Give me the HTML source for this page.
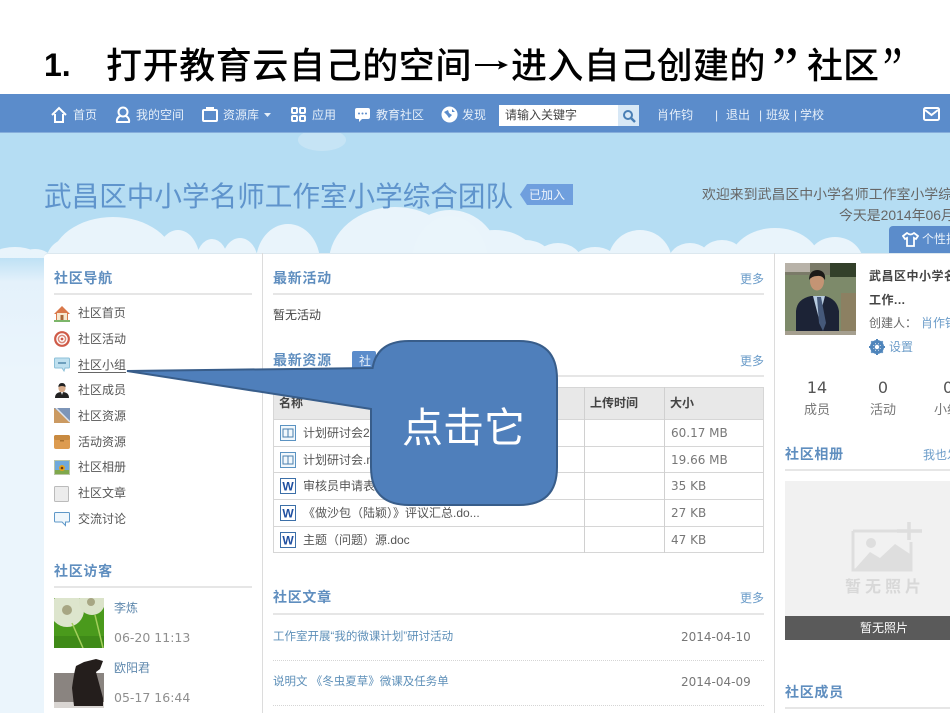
<!DOCTYPE html>
<html lang="zh"><head><meta charset="utf-8"><title>社区</title>
<style>
html,body{margin:0;padding:0;background:#fff}
body{width:950px;height:713px;overflow:hidden;position:relative;font-family:"Liberation Sans","Noto Sans CJK SC",sans-serif}
.t{position:absolute;white-space:nowrap;line-height:20px;height:20px;font-size:12px;color:#555}
.a{position:absolute}
#page{position:absolute;left:0;top:94px;width:950px;height:619px;overflow:hidden;background:#b5ddf3;filter:blur(.35px)}
#in{position:absolute;left:0;top:-94px;width:950px;height:713px}
.nav{color:#e6eff9}
.h{font-weight:700;font-size:14px;color:#5f8ebf;letter-spacing:.7px}
.hr{position:absolute;height:2px;background:#e6e6e6}
.mo{color:#6b9cc9}
.n{font-family:"DejaVu Sans",sans-serif;font-size:12px;color:#777}
.li{color:#555}
.lk{color:#5d8fb8;font-size:11.5px}
.c{text-align:center}
.v{position:absolute;background:#dcdcdc;width:1px}
.q{position:absolute;white-space:nowrap;top:38px;height:60px;line-height:60px;font-size:60px;color:#000;font-family:"Liberation Serif",serif}
</style></head><body>
<div class="t" style="left:44px;top:45px;height:40px;line-height:40px;font-size:32px;font-weight:700;color:#000">1.</div>
<div class="t" style="left:106px;top:41px;height:50px;line-height:50px;font-size:36px;letter-spacing:.6px;color:#000;font-weight:500">打开教育云自己的空间</div>
<svg class="a" style="left:474px;top:58px" width="36" height="14"><path d="M1 7H28" stroke="#000" stroke-width="2"/><path d="M24 2.500L34 7L24 11.500L26 7Z" fill="#000"/></svg>
<div class="t" style="left:511px;top:41px;height:50px;line-height:50px;font-size:36px;letter-spacing:.4px;color:#000;font-weight:500">进入自己创建的</div>
<div class="q" style="left:772px">”</div>
<div class="t" style="left:807px;top:41px;height:50px;line-height:50px;font-size:36px;color:#000;font-weight:500">社区</div>
<div class="q" style="left:883px;transform:scaleX(.72);transform-origin:left top">”</div>

<div id="page"><div id="in">
<svg class="a" style="left:0;top:133px" width="950" height="125">
<defs><linearGradient id="cl" gradientUnits="userSpaceOnUse" x1="0" y1="70" x2="0" y2="125"><stop offset="0" stop-color="#d3e9f7"/><stop offset="1" stop-color="#e9f4fb"/></linearGradient></defs>
<ellipse cx="322" cy="7" rx="24" ry="11" fill="#c6e4f5"/>
<g fill="url(#cl)" transform="translate(0,-133)">
<ellipse cx="15" cy="262" rx="28" ry="15"/><ellipse cx="35" cy="262" rx="18" ry="13"/>
<ellipse cx="113" cy="262" rx="62" ry="45"/><ellipse cx="70" cy="262" rx="24" ry="24"/>
<ellipse cx="178" cy="262" rx="22" ry="32"/><ellipse cx="212" cy="262" rx="16" ry="23"/><ellipse cx="240" cy="262" rx="18" ry="24"/>
<ellipse cx="288" cy="262" rx="32" ry="38"/>
<ellipse cx="395" cy="262" rx="66" ry="55"/><ellipse cx="450" cy="262" rx="50" ry="52"/>
<ellipse cx="495" cy="262" rx="42" ry="32"/><ellipse cx="525" cy="262" rx="28" ry="22"/>
<ellipse cx="558" cy="262" rx="24" ry="19"/><ellipse cx="595" cy="262" rx="22" ry="15"/><ellipse cx="640" cy="262" rx="32" ry="32"/>
<ellipse cx="690" cy="262" rx="22" ry="19"/><ellipse cx="722" cy="262" rx="24" ry="22"/><ellipse cx="775" cy="262" rx="45" ry="34"/><ellipse cx="835" cy="262" rx="28" ry="25"/>
</g>
<ellipse cx="450" cy="129" rx="38" ry="46" fill="#eaf5fb"/>
</svg>

<!-- nav -->
<div class="a" style="left:0;top:94px;width:950px;height:39px;background:#5b8ccb;border-bottom:1px solid #86aedb;box-sizing:border-box"></div>
<svg class="a" style="left:50px;top:106px" width="18" height="18" fill="none" stroke="#fff" stroke-width="2"><path d="M2 9L9 2L16 9M5 8V16H13V8"/></svg>
<div class="t nav" style="left:73px;top:105px">首页</div>
<svg class="a" style="left:115px;top:106px" width="16" height="18" fill="none" stroke="#fff" stroke-width="2"><ellipse cx="8" cy="6" rx="4.500" ry="4.500"/><path d="M5 10C2 12 1.500 14 2 16H14C14.500 14 14 12 11 10"/></svg>
<div class="t nav" style="left:136px;top:105px">我的空间</div>
<svg class="a" style="left:201px;top:105px" width="18" height="18" fill="none" stroke="#fff" stroke-width="2"><rect x="2" y="5" width="14" height="11" rx="1"/><path d="M5 3H13"/></svg>
<div class="t nav" style="left:223px;top:105px">资源库</div>
<svg class="a" style="left:264px;top:113px" width="8" height="4"><path d="M0 0H7L3.500 4Z" fill="#e6eff9"/></svg>
<svg class="a" style="left:290px;top:106px" width="17" height="17" fill="none" stroke="#fff" stroke-width="2"><rect x="2" y="2" width="5" height="5" rx="1"/><rect x="10" y="2" width="5" height="5" rx="1"/><rect x="2" y="10" width="5" height="5" rx="1"/><rect x="10" y="10" width="5" height="5" rx="1"/></svg>
<div class="t nav" style="left:312px;top:105px">应用</div>
<svg class="a" style="left:354px;top:107px" width="17" height="17"><path d="M3 1H14Q16 1 16 3V10Q16 12 14 12H8L5 15V12H3Q1 12 1 10V3Q1 1 3 1Z" fill="#fff"/><circle cx="5" cy="6.500" r="1" fill="#5b8ccb"/><circle cx="8.500" cy="6.500" r="1" fill="#5b8ccb"/><circle cx="12" cy="6.500" r="1" fill="#5b8ccb"/></svg>
<div class="t nav" style="left:376px;top:105px">教育社区</div>
<svg class="a" style="left:441px;top:106px" width="17" height="17"><circle cx="8.500" cy="8.500" r="8" fill="#fff"/><path d="M3 6L7 4L8 7L11 9L8 12L6 9ZM11 3L14 6L11 6Z" fill="#5b8ccb"/></svg>
<div class="t nav" style="left:462px;top:105px">发现</div>
<div class="a" style="left:499px;top:105px;width:119px;height:21px;background:#fff"></div>
<div class="a" style="left:618px;top:105px;width:21px;height:21px;background:#d8e8f6"></div>
<svg class="a" style="left:621px;top:108px" width="16" height="16" fill="none" stroke="#4a7fb5" stroke-width="2"><circle cx="7" cy="7" r="4"/><path d="M10 10L14 14" stroke-width="2.500"/></svg>
<div class="t" style="left:505px;top:105px;color:#444">请输入关键字</div>
<div class="t nav" style="left:657px;top:105px">肖作钧</div>
<div class="t nav" style="left:715px;top:105px">|</div>
<div class="t nav" style="left:726px;top:105px">退出</div>
<div class="t nav" style="left:759px;top:105px">|</div>
<div class="t nav" style="left:766px;top:105px">班级</div>
<div class="t nav" style="left:794px;top:105px">|</div>
<div class="t nav" style="left:800px;top:105px">学校</div>
<svg class="a" style="left:923px;top:107px" width="17" height="14" fill="none" stroke="#fff" stroke-width="2"><rect x="1" y="1" width="15" height="12" rx="1.500"/><path d="M2 3L8.500 8L15 3"/></svg>

<!-- banner -->
<div class="t" style="left:44px;top:177px;height:40px;line-height:40px;font-size:27.600px;color:#5f94cc">武昌区中小学名师工作室小学综合团队</div>
<svg class="a" style="left:520px;top:184px" width="53" height="21"><path d="M7 0H53V21H7L0 10.500Z" fill="#6f9fde"/></svg>
<div class="t" style="left:529px;top:185px;color:#eaf2fb">已加入</div>
<div class="t" style="left:702px;top:184px;font-size:13.900px;color:#666">欢迎来到武昌区中小学名师工作室小学综合团队</div>
<div class="t" style="left:839px;top:205px;font-size:13.900px;color:#666">今天是2014年06月</div>
<div class="a" style="left:889px;top:226px;width:61px;height:27px;background:#5b8ccb;border-radius:4px 0 0 0"></div>
<svg class="a" style="left:902px;top:232px" width="17" height="15" fill="none" stroke="#fff" stroke-width="1.800"><path d="M5 1L1 4L3 7L5 6V14H12V6L14 7L16 4L12 1Q8.500 4 5 1Z"/></svg>
<div class="t" style="left:922px;top:229px;color:#e6eff9">个性抗</div>

<!-- gutter + panels -->
<div class="a" style="left:0;top:252px;width:44px;height:461px;background:linear-gradient(#e2f0fa00,#e4f1fb 30px,#ebf5fc 120px)"></div>
<div class="a" style="left:44px;top:253px;width:906px;height:460px;background:#fff;border-top:1px solid #dce8ef;box-sizing:border-box;border-radius:4px 0 0 0"></div>
<div class="v" style="left:262px;top:253px;height:460px"></div>
<div class="v" style="left:774px;top:253px;height:460px"></div>

<!-- left nav -->
<div class="t h" style="left:54px;top:268px">社区导航</div>
<div class="hr" style="left:54px;top:293px;width:198px"></div>
<svg class="a" style="left:54px;top:306px" width="17" height="17"><path d="M8 0L16 8H14V14H2V8H0Z" fill="#d9784a"/><rect x="3" y="7" width="10" height="7" fill="#f6e8d0"/><rect x="6.500" y="9" width="3" height="5" fill="#a8683a"/><rect x="0" y="14" width="16" height="2" fill="#7cb66a"/></svg>
<div class="t li" style="left:78px;top:303px;letter-spacing:-.100px">社区首页</div>
<svg class="a" style="left:54px;top:331px" width="16" height="16" fill="none"><circle cx="8" cy="8" r="6.800" stroke="#cf5b48" stroke-width="2.200"/><circle cx="8" cy="8" r="3.600" stroke="#d98a7a" stroke-width="1.500"/><circle cx="8" cy="8" r="1.400" fill="#cf5b48"/></svg>
<div class="t li" style="left:78px;top:329px">社区活动</div>
<svg class="a" style="left:54px;top:357px" width="16" height="16"><path d="M1.500 1H14.500Q15.500 1 15.500 2V10Q15.500 11 14.500 11H11L10 14L8 11H1.500Q.500 11 .500 10V2Q.500 1 1.500 1Z" fill="#bfe0ef" stroke="#8cc0d8"/><rect x="4" y="5" width="8" height="2" fill="#6d9fbd"/></svg>
<div class="t li" style="left:78px;top:355px">社区小组</div>
<div class="a" style="left:78px;top:372px;width:48px;height:1px;background:#666"></div>
<svg class="a" style="left:54px;top:382px" width="16" height="17"><path d="M1 16Q1 10 8 10Q15 10 15 16Z" fill="#222"/><ellipse cx="8" cy="6" rx="3.600" ry="4.500" fill="#d8ad8c"/><path d="M4.400 5Q4.500 1 8 1Q11.500 1 11.600 5Q8 3 4.400 5Z" fill="#222"/><path d="M7 10H9L8 13Z" fill="#fff"/></svg>
<div class="t li" style="left:78px;top:380px">社区成员</div>
<svg class="a" style="left:54px;top:408px" width="16" height="16"><rect width="16" height="15" fill="#cb9a62"/><path d="M0 0H16V13Z" fill="#7d95b8"/><path d="M2 0L16 14" stroke="#dde4ee" stroke-width="1.500"/></svg>
<div class="t li" style="left:78px;top:406px">社区资源</div>
<svg class="a" style="left:54px;top:434px" width="16" height="16"><rect y="1" width="16" height="14" rx="2" fill="#dd9b4f"/><rect y="1" width="16" height="5" rx="2" fill="#c88a40"/><rect x="6" y="6" width="4" height="1.500" fill="#a86f2c"/></svg>
<div class="t li" style="left:78px;top:432px">活动资源</div>
<svg class="a" style="left:54px;top:460px" width="16" height="15"><rect width="16" height="15" fill="#b9c6a8"/><rect x="1" y="1" width="14" height="10" fill="#6fa9dc"/><rect x="1" y="10" width="14" height="4" fill="#7fa84c"/><circle cx="8" cy="8" r="3" fill="#e3a21c"/><circle cx="8" cy="8" r="1.300" fill="#6b3a10"/></svg>
<div class="t li" style="left:78px;top:457px">社区相册</div>
<svg class="a" style="left:54px;top:486px" width="15" height="16"><rect x=".5" y=".5" width="14" height="15" rx="1" fill="#ececec" stroke="#bbb"/></svg>
<div class="t li" style="left:78px;top:483px">社区文章</div>
<svg class="a" style="left:54px;top:512px" width="16" height="15"><path d="M1.500 .5H14.500Q15.500 .5 15.500 1.500V9Q15.500 10 14.500 10H11.500V13.500L8 10H1.500Q.500 10 .500 9V1.500Q.500 .5 1.500 .5Z" fill="#f0f7fc" stroke="#5f98c8"/></svg>
<div class="t li" style="left:78px;top:509px">交流讨论</div>

<div class="t h" style="left:54px;top:561px">社区访客</div>
<div class="hr" style="left:54px;top:586px;width:198px"></div>
<svg class="a" style="left:54px;top:598px" width="50" height="50"><rect width="50" height="50" fill="#4a9a1c"/><rect y="38" width="50" height="12" fill="#3f8a18"/><circle cx="13" cy="12" r="17" fill="#dde5cd"/><circle cx="38" cy="4" r="13" fill="#dbe3c9"/><circle cx="13" cy="12" r="5" fill="#a7a683"/><circle cx="37" cy="4" r="4" fill="#a7a683"/><path d="M18 25L29 50M41 17L49 50" stroke="#a4cf5c" stroke-width="1.500"/></svg>
<div class="t" style="left:114px;top:598px;color:#5f88ad">李炼</div>
<div class="t n" style="left:114px;top:628px;font-size:12.500px;color:#8f8f8f">06-20 11:13</div>
<svg class="a" style="left:54px;top:658px" width="50" height="50"><rect width="50" height="50" fill="#fff"/><rect y="15" width="50" height="35" fill="#8a8480"/><rect y="44" width="50" height="6" fill="#d9d5d2"/><path d="M22 8L30 4L42 1L49 3L46 11L42 14L49 40V48H20L18 30Q20 15 22 8Z" fill="#241e1c"/></svg>
<div class="t" style="left:114px;top:658px;color:#5f88ad">欧阳君</div>
<div class="t n" style="left:114px;top:688px;font-size:12.500px;color:#8f8f8f">05-17 16:44</div>

<!-- middle -->
<div class="t h" style="left:273px;top:268px">最新活动</div>
<div class="t mo" style="left:740px;top:269px">更多</div>
<div class="hr" style="left:273px;top:293px;width:491px"></div>
<div class="t" style="left:273px;top:305px;color:#444">暂无活动</div>
<div class="t h" style="left:273px;top:350px">最新资源</div>
<div class="a" style="left:352px;top:351px;width:24px;height:18px;background:#5b8ccb;border-radius:2px 2px 0 0"></div>
<div class="t" style="left:359px;top:351px;color:#e6eff9">社</div>
<div class="t mo" style="left:740px;top:351px">更多</div>
<div class="hr" style="left:273px;top:375px;width:491px"></div>

<div class="a" style="left:273px;top:387px;width:491px;height:166px;border:1px solid #d6d6d6;box-sizing:border-box"></div>
<div class="a" style="left:274px;top:388px;width:489px;height:31px;background:#e8e8e8"></div>
<div class="a" style="left:274px;top:419px;width:489px;height:1px;background:#d6d6d6"></div>
<div class="a" style="left:274px;top:446px;width:489px;height:1px;background:#d6d6d6"></div>
<div class="a" style="left:274px;top:472px;width:489px;height:1px;background:#d6d6d6"></div>
<div class="a" style="left:274px;top:499px;width:489px;height:1px;background:#d6d6d6"></div>
<div class="a" style="left:274px;top:526px;width:489px;height:1px;background:#d6d6d6"></div>
<div class="v" style="left:584px;top:387px;height:166px;background:#d0d0d0"></div>
<div class="v" style="left:664px;top:387px;height:166px;background:#d0d0d0"></div>
<div class="t" style="left:279px;top:393px;font-weight:700;color:#444">名称</div>
<div class="t" style="left:590px;top:393px;font-weight:700;color:#444">上传时间</div>
<div class="t" style="left:670px;top:393px;font-weight:700;color:#444">大小</div>

<svg class="a" style="left:280px;top:425px" width="16" height="16" fill="none"><rect x=".5" y=".5" width="15" height="15" fill="#f2f8fc" stroke="#5b93c2"/><rect x="3" y="4" width="10" height="8" stroke="#4b7fae"/><path d="M8 4V12" stroke="#4b7fae"/></svg>
<div class="t" style="left:303px;top:423px">计划研讨会2</div>
<div class="t n" style="left:671px;top:423px">60.17 MB</div>
<svg class="a" style="left:280px;top:452px" width="16" height="16" fill="none"><rect x=".5" y=".5" width="15" height="15" fill="#f2f8fc" stroke="#5b93c2"/><rect x="3" y="4" width="10" height="8" stroke="#4b7fae"/><path d="M8 4V12" stroke="#4b7fae"/></svg>
<div class="t" style="left:303px;top:450px">计划研讨会.m</div>
<div class="t n" style="left:671px;top:450px">19.66 MB</div>
<svg class="a" style="left:280px;top:478px" width="16" height="16"><rect x=".5" y=".5" width="15" height="15" fill="#fff" stroke="#3c6fa8"/><text x="8" y="12.500" font-size="12" font-weight="700" text-anchor="middle" fill="#1f4fa0" font-family="Liberation Sans">W</text></svg>
<div class="t" style="left:303px;top:476px">审核员申请表</div>
<div class="t n" style="left:671px;top:476px">35 KB</div>
<svg class="a" style="left:280px;top:505px" width="16" height="16"><rect x=".5" y=".5" width="15" height="15" fill="#fff" stroke="#3c6fa8"/><text x="8" y="12.500" font-size="12" font-weight="700" text-anchor="middle" fill="#1f4fa0" font-family="Liberation Sans">W</text></svg>
<div class="t" style="left:303px;top:503px">《做沙包（陆颖）》评议汇总.do...</div>
<div class="t n" style="left:671px;top:503px">27 KB</div>
<svg class="a" style="left:280px;top:532px" width="16" height="16"><rect x=".5" y=".5" width="15" height="15" fill="#fff" stroke="#3c6fa8"/><text x="8" y="12.500" font-size="12" font-weight="700" text-anchor="middle" fill="#1f4fa0" font-family="Liberation Sans">W</text></svg>
<div class="t" style="left:303px;top:530px">主题（问题）源.doc</div>
<div class="t n" style="left:671px;top:530px">47 KB</div>

<div class="t h" style="left:273px;top:587px">社区文章</div>
<div class="t mo" style="left:740px;top:588px">更多</div>
<div class="hr" style="left:273px;top:613px;width:491px"></div>
<div class="t lk" style="left:273px;top:627px">工作室开展“我的微课计划”研讨活动</div>
<div class="t n" style="left:681px;top:627px">2014-04-10</div>
<div class="a" style="left:273px;top:660px;width:491px;border-top:1px dotted #d5d5d5"></div>
<div class="t lk" style="left:273px;top:672px">说明文 《冬虫夏草》微课及任务单</div>
<div class="t n" style="left:681px;top:672px">2014-04-09</div>
<div class="a" style="left:273px;top:705px;width:491px;border-top:1px dotted #d5d5d5"></div>

<!-- right -->
<svg class="a" style="left:785px;top:263px" width="71" height="72"><rect width="71" height="72" fill="#7d8a6a"/><rect width="71" height="12" fill="#7a7a68"/><rect x="0" y="0" width="25" height="9" fill="#b8b2a8"/><rect x="45" y="0" width="26" height="14" fill="#33402a"/><rect x="56" y="30" width="15" height="40" fill="#8c8062"/><rect x="0" y="68" width="71" height="4" fill="#a59f8f"/><path d="M11 68V48Q12 36 26 33H40Q52 36 54 48V68Z" fill="#1c2336"/><path d="M28 33L34 56L40 33Z" fill="#b8cce0"/><path d="M32 34H36L41 60L38 68L34 60Z" fill="#45597a"/><ellipse cx="32" cy="18" rx="7" ry="9.500" fill="#c49474"/><path d="M24 17Q24 7 33 7Q41 8 40 17Q37 12 32 13Q27 13 24 17Z" fill="#1c1a18"/></svg>
<div class="t" style="left:869px;top:266px;font-weight:700;color:#444;letter-spacing:.5px">武昌区中小学名</div>
<div class="t" style="left:869px;top:290px;font-weight:700;color:#444;letter-spacing:.5px">工作...</div>
<div class="t" style="left:869px;top:313px;color:#666">创建人：</div>
<div class="t" style="left:921px;top:313px;color:#6b9cc9">肖作钧</div>
<svg class="a" style="left:869px;top:339px" width="16" height="16"><circle cx="8" cy="8" r="5.500" fill="none" stroke="#4f85bb" stroke-width="3"/><path d="M8 0V16M0 8H16M2.300 2.300L13.700 13.700M13.700 2.300L2.300 13.700" stroke="#4f85bb" stroke-width="2"/><circle cx="8" cy="8" r="2.200" fill="#fff"/></svg>
<div class="t" style="left:889px;top:337px;color:#6b9cc9">设置</div>
<div class="t n c" style="left:797px;top:378px;width:40px;font-size:16px;color:#555">14</div>
<div class="t c" style="left:797px;top:400px;width:40px;font-size:13px;color:#777">成员</div>
<div class="t n c" style="left:863px;top:378px;width:40px;font-size:16px;color:#555">0</div>
<div class="t c" style="left:863px;top:400px;width:40px;font-size:13px;color:#777">活动</div>
<div class="t n" style="left:943px;top:378px;font-size:16px;color:#555">0</div>
<div class="t" style="left:934px;top:400px;font-size:13px;color:#777">小组</div>
<div class="t h" style="left:785px;top:444px">社区相册</div>
<div class="t" style="left:923px;top:445px;color:#6b9cc9">我也发</div>
<div class="hr" style="left:785px;top:469px;width:165px"></div>
<div class="a" style="left:785px;top:481px;width:165px;height:135px;background:#f1f1f1"></div>
<svg class="a" style="left:850px;top:520px" width="72" height="55"><path d="M3 11H49M3 11V50H61V22" fill="none" stroke="#dedede" stroke-width="3"/><path d="M4 50L20 32L30 38L45 24L60 34V50Z" fill="#dedede"/><circle cx="21" cy="23" r="5" fill="#dedede"/><path d="M47 11H72M59 2V20" stroke="#dedede" stroke-width="3.500"/></svg>
<div class="t" style="left:845px;top:578px;font-size:16px;font-weight:700;color:#d8d8d8;letter-spacing:4px">暂无照片</div>
<div class="a" style="left:785px;top:616px;width:165px;height:24px;background:#5a5a5a"></div>
<div class="t" style="left:860px;top:618px;color:#fff">暂无照片</div>
<div class="t h" style="left:785px;top:682px">社区成员</div>
<div class="hr" style="left:785px;top:707px;width:165px"></div>
</div></div>

<!-- callout -->
<svg class="a" style="left:0;top:0" width="950" height="713"><path d="M409 341H519Q557 341 557 379V467Q557 505 519 505H409Q371 505 371 467V409L127 371L372.600 368Q377 341 409 341Z" fill="#4f7fbb" stroke="#385d8a" stroke-width="2"/></svg>
<div class="t" style="left:402px;top:400px;height:56px;line-height:56px;font-size:41px;color:#fff">点击它</div>
</body></html>
